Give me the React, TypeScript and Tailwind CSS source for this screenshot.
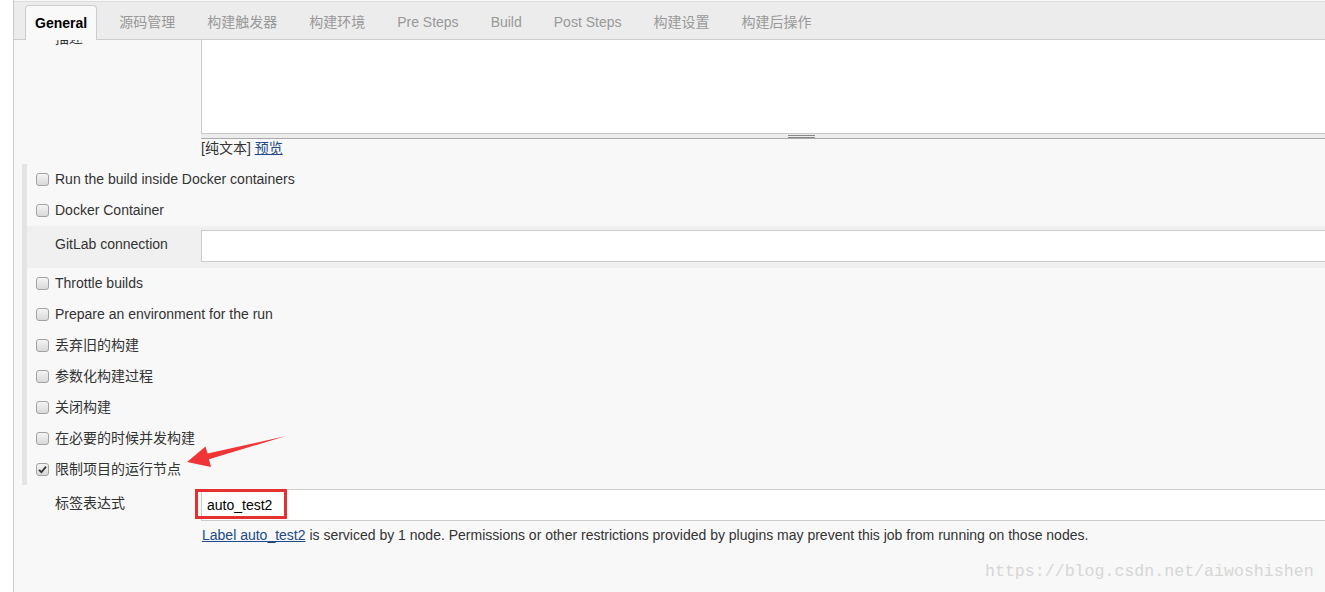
import React from "react";

function Box({ checked = false }: { checked?: boolean }) {
  return (
    <span className="relative inline-flex h-[13px] w-[13px] shrink-0 items-center justify-center rounded-[3px] border border-[#a3a3a3] bg-gradient-to-b from-[#f4f4f4] to-[#d9d9d9]">
      {checked && (
        <svg width="9" height="9" viewBox="0 0 9 9">
          <path d="M1 4.8 L3.4 7.2 L8 1.6" fill="none" stroke="#333" strokeWidth="1.8" />
        </svg>
      )}
    </span>
  );
}

function CheckRow({ label, checked = false }: { label: string; checked?: boolean }) {
  return (
    <div className="flex h-[31px] items-center pl-[9px]">
      <Box checked={checked} />
      <span className="ml-[6px]">{label}</span>
    </div>
  );
}

const tabs = ["源码管理", "构建触发器", "构建环境", "Pre Steps", "Build", "Post Steps", "构建设置", "构建后操作"];

export default function App() {
  return (
    <div className="relative flex h-[592px] w-[1325px] overflow-hidden bg-white font-['Liberation_Sans','Noto_Sans_CJK_SC',sans-serif] text-[14px] leading-[17px] text-[#333]">
      <div className="w-[13px] shrink-0 bg-white" />
      <div className="flex w-[1400px] shrink-0 flex-col border-l border-[#cccccc] bg-[#f8f8f8]">
        {/* tab bar */}
        <div className="relative z-10 mt-[1px] flex h-[39px] items-end gap-[12px] border-y border-t-[#dddddd] border-b-[#cccccc] bg-[#ececec] pl-[11px]">
          <div className="-mb-[1px] flex h-[35px] items-center rounded-t-[4px] border border-b-0 border-[#cccccc] bg-[#f9f9f9] px-[9px] font-bold text-black">
            General
          </div>
          {tabs.map((t) => (
            <div key={t} className="-mb-[1px] flex h-[35px] items-center px-[10px] text-[#999999]">
              {t}
            </div>
          ))}
        </div>

        {/* description */}
        <div className="flex">
          <div className="w-[187px] shrink-0 pl-[41px]">
            <div className="-mt-[10px]">描述</div>
          </div>
          <div className="h-[93px] flex-1 border-l border-[#cccccc] bg-white" />
        </div>
        <div className="ml-[187px] flex h-[6px] border-y border-t-[#c8c8c8] border-b-[#aaaaaa] bg-[#ececec]">
          <div className="ml-[587px] mt-[1px] h-[3px] w-[27px] border-y border-[#888888]" />
        </div>
        <div className="mt-[1px] h-[17px] pl-[187px]">
          [纯文本] <span className="text-[#204a87] underline">预览</span>
        </div>

        {/* options section */}
        <div className="ml-[8px] mt-[7px] border-l-[5px] border-[#e4e4e4]">
          <CheckRow label="Run the build inside Docker containers" />
          <CheckRow label="Docker Container" />
          <div className="flex h-[42px] items-start bg-[#f0f0f0] pt-[4px]">
            <div className="flex h-[29px] w-[174px] shrink-0 items-center pl-[28px]">GitLab connection</div>
            <div className="h-[32px] flex-1 border border-r-0 border-[#cccccc] bg-white" />
          </div>
          <CheckRow label="Throttle builds" />
          <CheckRow label="Prepare an environment for the run" />
          <CheckRow label="丢弃旧的构建" />
          <CheckRow label="参数化构建过程" />
          <CheckRow label="关闭构建" />
          <CheckRow label="在必要的时候并发构建" />
          <CheckRow label="限制项目的运行节点" checked />
        </div>

        {/* label expression */}
        <div className="flex pt-[4px]">
          <div className="flex h-[29px] w-[187px] shrink-0 items-center pl-[41px]">标签表达式</div>
          <div className="relative flex h-[32px] flex-1 items-center border border-r-0 border-[#cccccc] bg-white pl-[5px] text-black">
            auto_test2
            <div className="absolute -left-[7px] -top-[1px] h-[30px] w-[92px] border-[3px] border-[#e53030]" />
          </div>
        </div>
        <div className="mt-[6px] pl-[188px]">
          <span className="text-[#204a87] underline">Label auto_test2</span> is serviced by 1 node. Permissions or
          other restrictions provided by plugins may prevent this job from running on those nodes.
        </div>
      </div>

      {/* annotation arrow */}
      <svg className="pointer-events-none absolute left-0 top-0" width="1325" height="592">
        <polygon
          points="187,462 205.5,446.5 207.6,453.6 286,436 209,459.2 211,467"
          fill="#ef3535"
        />
      </svg>

      {/* watermark */}
      <div className="pointer-events-none absolute left-[985px] top-[561px] font-['Liberation_Mono',monospace] text-[16.6px] leading-[22px] text-[#d6d6d6]">
        https://blog.csdn.net/aiwoshishen
      </div>
    </div>
  );
}
